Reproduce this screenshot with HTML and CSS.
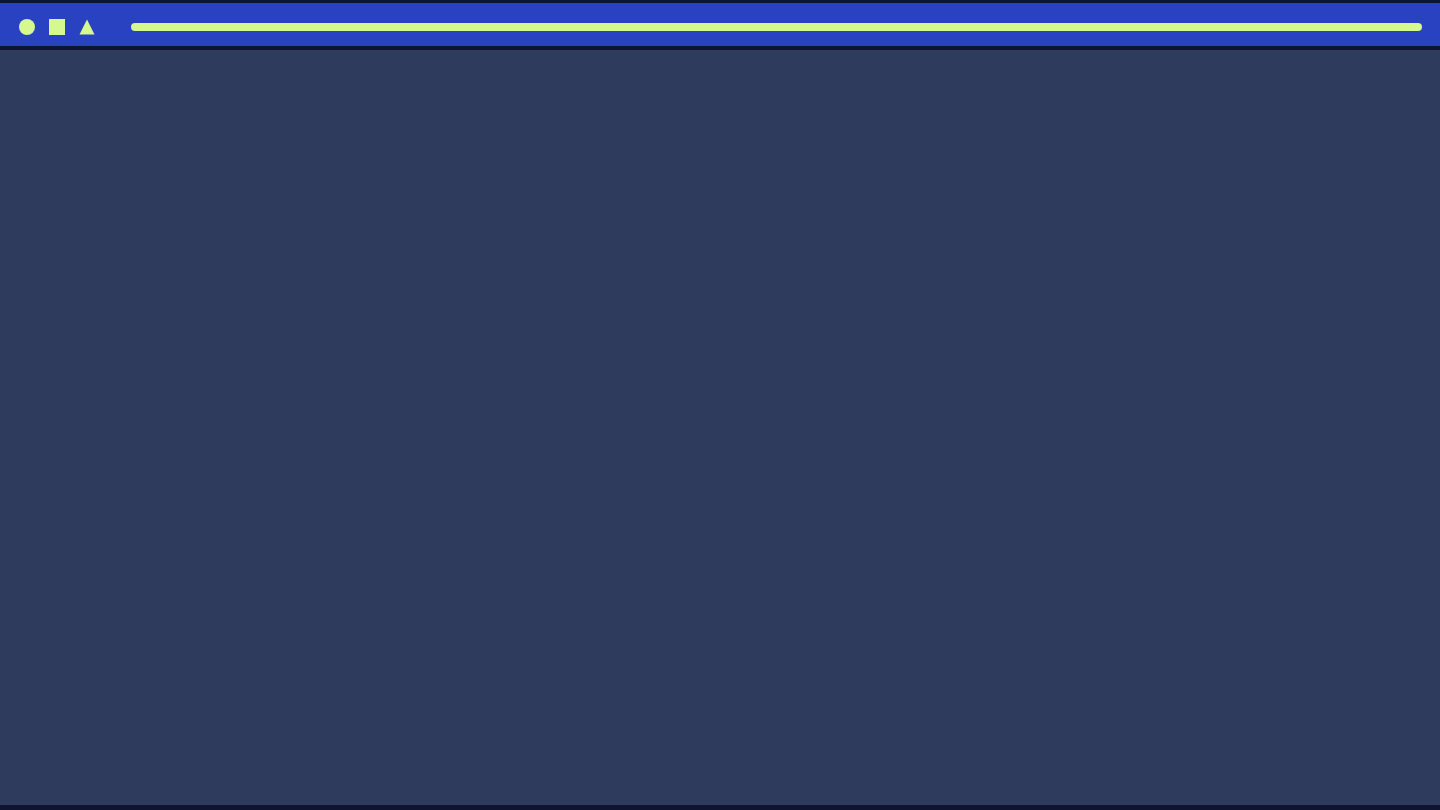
FILE: index.html
```html
<!DOCTYPE html>
<html lang="en">
<head>
<meta charset="utf-8">
<title>Window</title>
<link rel="stylesheet" href="styles.css">
</head>
<body>
<div class="frame">
  <header class="titlebar">
    <div class="shapes">
      <span class="shape circle"></span>
      <span class="shape square"></span>
      <svg class="shape triangle" viewBox="0 0 16 16" width="16" height="16" aria-hidden="true"><polygon points="8,0.5 15.5,15.5 0.5,15.5" fill="#d6f98f"/></svg>
    </div>
    <div class="address"></div>
  </header>
  <main class="content"></main>
</div>
</body>
</html>
```

FILE: styles.css
```css
html, body {
  margin: 0;
  padding: 0;
  height: 100%;
}
body {
  background: #0e1431;
  font-family: "Liberation Sans", Arial, sans-serif;
}
.frame {
  height: 810px;
  display: flex;
  flex-direction: column;
  box-sizing: border-box;
  border-top: 3px solid #0e1431;
  border-bottom: 5px solid #0e1431;
}
.titlebar {
  box-sizing: border-box;
  height: 47px;
  background: #2942c2;
  border-bottom: 4px solid #0e1431;
  display: flex;
  align-items: center;
  padding: 5px 18px 0 19px;
}
.shapes {
  display: flex;
  align-items: center;
  gap: 14px;
}
.shape {
  display: block;
  width: 16px;
  height: 16px;
  background: #d6f98f;
}
.circle {
  border-radius: 50%;
}
.triangle {
  background: none;
}
.address {
  flex: 1;
  height: 8px;
  margin-left: 36px;
  border-radius: 4px;
  background: #d6f98f;
}
.content {
  flex: 1;
  background: #2f3b5c;
}
```
